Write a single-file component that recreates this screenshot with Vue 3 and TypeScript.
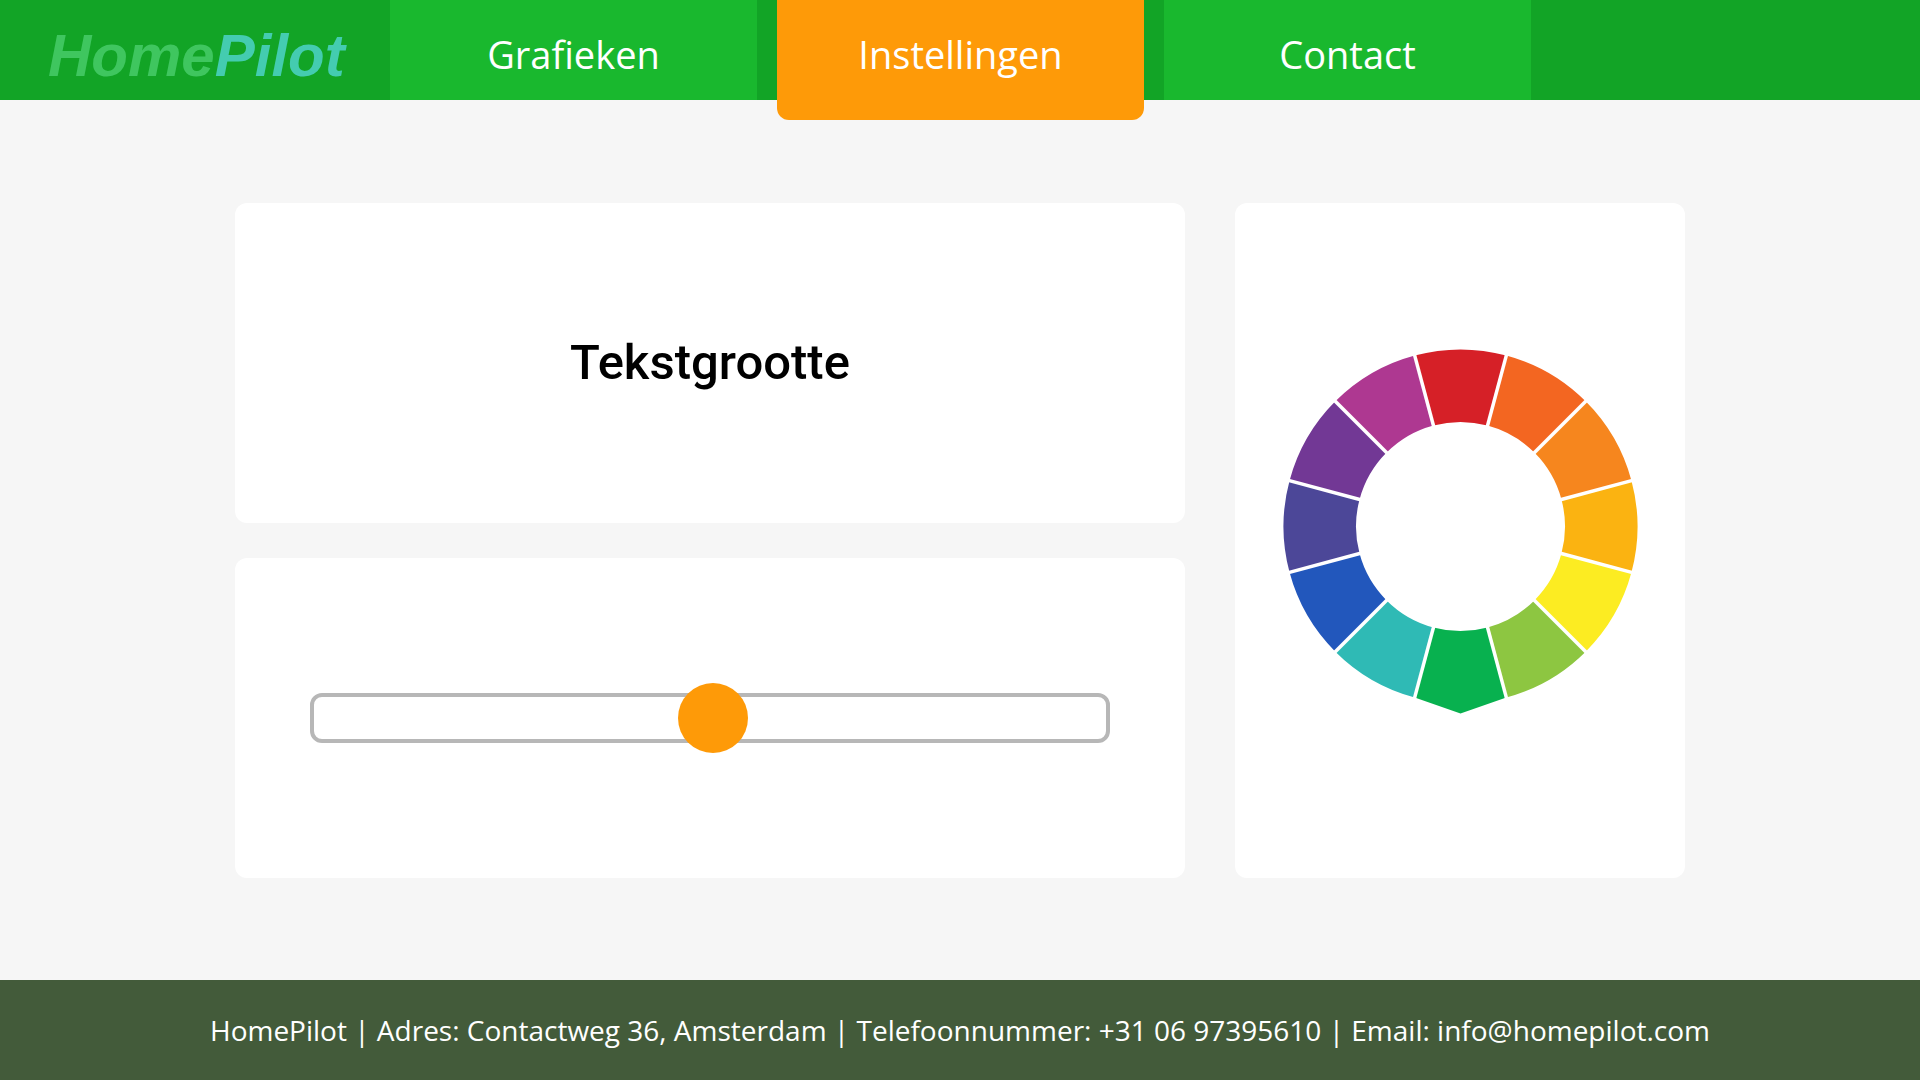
<script setup lang="ts">
import { ref } from 'vue'

interface Tab {
  label: string
  href: string
  active: boolean
}

interface Segment {
  color: string
  points: string
}

const tabs: Tab[] = [
  { label: 'Grafieken', href: '#grafieken', active: false },
  { label: 'Instellingen', href: '#instellingen', active: true },
  { label: 'Contact', href: '#contact', active: false },
]

const textSize = ref<number>(126)

const colors: string[] = [
  '#d62027', '#f36621', '#f6861e', '#fbb311', '#fcec22', '#8dc641',
  '#08b14f', '#2fbab5', '#2257bc', '#4c4798', '#723895', '#ae3891',
]

const cx = 200.5
const cy = 186.5
const outer = 177
const inner = 104.5

function at(radius: number, degrees: number): string {
  const a = (degrees * Math.PI) / 180
  return `${(cx + radius * Math.sin(a)).toFixed(2)} ${(cy - radius * Math.cos(a)).toFixed(2)}`
}

// The bottom segment ends in a point instead of following the outer arc.
const segments: Segment[] = colors.map((color, i) => {
  const from = i * 30 - 15
  const to = i * 30 + 15
  const edge = i === 6
    ? `L ${cx} ${cy + 187} L ${at(outer, to)}`
    : `A ${outer} ${outer} 0 0 1 ${at(outer, to)}`
  return {
    color,
    points: `M ${at(inner, from)} L ${at(outer, from)} ${edge} L ${at(inner, to)} A ${inner} ${inner} 0 0 0 ${at(inner, from)} Z`,
  }
})

const dividers: string[] = colors.map((_, i) => `M ${at(inner - 3, i * 30 + 15)} L ${at(outer + 4, i * 30 + 15)}`)
</script>

<template>
  <div class="page">
    <header class="header">
      <a class="logo" href="#home"><span>Home</span><span class="logo-accent">Pilot</span></a>
      <nav class="nav">
        <a
          v-for="tab in tabs"
          :key="tab.label"
          :href="tab.href"
          class="tab"
          :class="{ active: tab.active }"
        >{{ tab.label }}</a>
      </nav>
    </header>

    <main class="main">
      <div class="settings">
        <section class="card title-card">
          <label class="title" for="text-size">Tekstgrootte</label>
        </section>
        <section class="card slider-card">
          <input id="text-size" v-model.number="textSize" class="slider" type="range" min="0" max="250">
        </section>
        <section class="card wheel-card">
          <svg class="wheel" viewBox="0 0 400 400" role="img" aria-label="Kleurenwiel">
            <path v-for="s in segments" :key="s.color" :d="s.points" :fill="s.color" />
            <path v-for="d in dividers" :key="d" :d="d" stroke="#fff" stroke-width="3.5" />
          </svg>
        </section>
      </div>
    </main>

    <footer class="footer">
      HomePilot | Adres: Contactweg 36, Amsterdam | Telefoonnummer: +31 06 97395610 | Email: info@homepilot.com
    </footer>
  </div>
</template>

<style>
body {
  margin: 0;
  background: #f6f6f6;
}
</style>

<style scoped>
.page {
  display: flex;
  flex-direction: column;
  min-height: 100vh;
  font-family: "Segoe UI", "Open Sans", "Noto Sans", sans-serif;
}

.header {
  display: flex;
  height: 100px;
  background: #12a426;
}

.logo {
  box-sizing: border-box;
  display: flex;
  flex: 0 1 390px;
  align-items: center;
  padding-left: 48px;
  padding-top: 12px;
  color: #3fc65f;
  font: italic bold 60px/80px "Liberation Sans", Arial, sans-serif;
  text-decoration: none;
}

.logo-accent {
  color: #44ccb0;
}

.nav {
  display: flex;
  flex: 0 1 1141px;
  gap: 20px;
  align-items: flex-start;
}

.tab {
  box-sizing: border-box;
  flex: 1;
  height: 100px;
  padding-top: 24px;
  background: #19b82e;
  color: #fff;
  font-size: 38px;
  line-height: 60px;
  text-align: center;
  text-decoration: none;
}

.tab.active {
  height: 120px;
  border-radius: 0 0 12px 12px;
  background: #fe9a08;
}

.main {
  display: flex;
  flex: 1;
  align-items: center;
  justify-content: center;
  padding: 40px;
}

.settings {
  display: grid;
  flex: 0 1 1450px;
  grid-template-columns: 19fr 9fr;
  grid-auto-rows: minmax(320px, auto);
  gap: 35px 50px;
}

.card {
  display: flex;
  align-items: center;
  justify-content: center;
  border-radius: 12px;
  background: #fff;
}

.wheel-card {
  grid-row: 1 / 3;
  grid-column: 2;
}

.title {
  color: #000;
  font: 500 49px/60px Bahnschrift, Roboto, sans-serif;
}

.slider-card {
  padding: 0 75px;
}

.slider {
  flex: 1;
  min-width: 0;
  height: 70px;
  margin: 0;
  appearance: none;
  background: transparent;
  cursor: pointer;
}

.slider::-webkit-slider-runnable-track {
  box-sizing: border-box;
  height: 50px;
  border: 4px solid #b7b7b7;
  border-radius: 12px;
}

.slider::-webkit-slider-thumb {
  width: 70px;
  height: 70px;
  margin-top: -14px;
  appearance: none;
  border-radius: 50%;
  background: #fe9a08;
}

.wheel {
  width: 400px;
  max-width: 100%;
}

.footer {
  padding: 20px;
  background: #435b3a;
  color: #fff;
  font-size: 28px;
  line-height: 60px;
  text-align: center;
}
</style>
